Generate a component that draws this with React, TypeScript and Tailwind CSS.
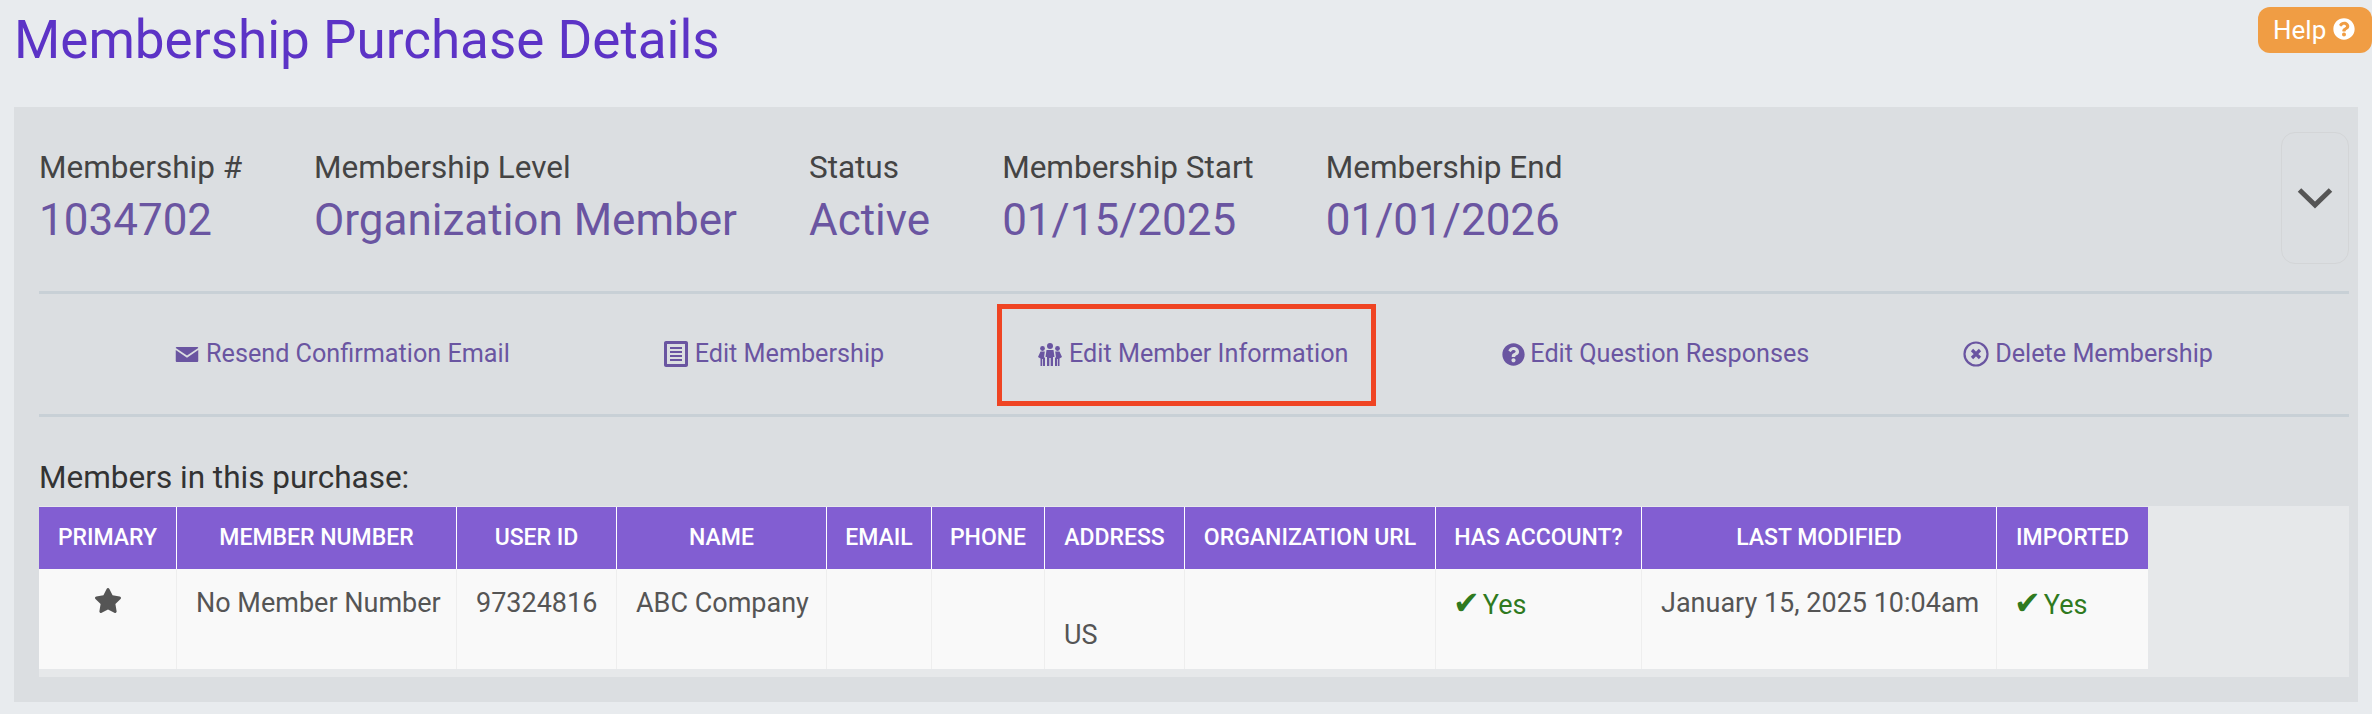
import { FaQuestionCircle, FaStar } from "react-icons/fa";

const font = { fontFamily: "Roboto, sans-serif" };

const EnvelopeIcon = () => (
  <svg viewBox="0 0 24 16" className="h-[15px] w-[24px] fill-current">
    <path d="M1 0h22c.6 0 1 .4 1 1L12 9 0 1c0-.6.4-1 1-1z" />
    <path d="M0 3.2 12 11.4 24 3.2V15c0 .6-.4 1-1 1H1c-.6 0-1-.4-1-1z" />
  </svg>
);

const ListIcon = () => (
  <svg viewBox="0 0 24 26" className="h-[26px] w-[24px] fill-current">
    <path
      fillRule="evenodd"
      d="M2 0h20c1.1 0 2 .9 2 2v22c0 1.1-.9 2-2 2H2c-1.100 0-2-.9-2-2V2C0 .9.900 0 2 0zm1 3v20h18V3z"
    />
    <path d="M6 6h12v2H6zM6 10h12v2H6zM6 14h12v2H6zM6 18h12v2H6z" />
  </svg>
);

const PeopleIcon = () => (
  <svg viewBox="0 0 24 23" className="h-[23px] w-[24px] fill-current">
    <circle cx="12" cy="3" r="3" />
    <circle cx="4.500" cy="5.500" r="2.400" />
    <circle cx="19.500" cy="5.500" r="2.400" />
    <path d="M8.500 7h7l1 7-1.500 0V23h-2.300v-8h-1.400v8H9V14H7.500z" />
    <path d="M2.500 8.500H6.800L6 14.500h1V23H4.800v-7h-.8v7H2.500v-7.500L0 14z" />
    <path d="M17.200 8.500h4.300L24 14l-2.500 1.500V23H20v-7h-.8v7H17v-8.500h1z" />
  </svg>
);

const CircleXIcon = () => (
  <svg viewBox="0 0 26 26" className="h-[26px] w-[26px] fill-none stroke-current">
    <circle cx="13" cy="13" r="11.500" strokeWidth="2.200" />
    <path d="M9 9l8 8M17 9l-8 8" strokeWidth="3.200" />
  </svg>
);

const summary = [
  { label: "Membership #", value: "1034702" },
  { label: "Membership Level", value: "Organization Member" },
  { label: "Status", value: "Active" },
  { label: "Membership Start", value: "01/15/2025" },
  { label: "Membership End", value: "01/01/2026" },
];

const columns = [
  { name: "Primary", width: "w-[138px]" },
  { name: "Member Number", width: "w-[280px]" },
  { name: "User ID", width: "w-[160px]" },
  { name: "Name", width: "w-[210px]" },
  { name: "Email", width: "w-[105px]" },
  { name: "Phone", width: "w-[113px]" },
  { name: "Address", width: "w-[140px]" },
  { name: "Organization URL", width: "w-[251px]" },
  { name: "Has Account?", width: "w-[206px]" },
  { name: "Last Modified", width: "w-[355px]" },
  { name: "Imported", width: "w-[151px]" },
];

const cell = "border-r border-[#eeeeee] px-[19px] pt-[18px] pb-[18px] align-top last:border-r-0";

const Yes = () => (
  <span className="-ml-[2px] whitespace-nowrap text-[#2f7a1f]">
    <span className="mr-[3px] text-[32px] leading-[32px]" style={{ fontFamily: "'DejaVu Sans', sans-serif" }}>
      ✔
    </span>
    Yes
  </span>
);

const App = () => {
  return (
    <div className="h-[714px] w-full overflow-hidden bg-[#e8ebee]" style={font}>
      <header className="flex h-[107px] items-start justify-between pl-[14px]">
        <h1 className="mt-[10px] text-[53px] leading-[60px] text-[#5c33c6]">
          Membership Purchase Details
        </h1>
        <button className="mt-[7px] flex h-[46px] w-[114px] items-center gap-[7px] rounded-[12px] bg-[#f09d44] pl-[15px] text-[26px] text-white">
          Help <FaQuestionCircle className="mb-[3px] h-[22px] w-[22px]" />
        </button>
      </header>

      <section className="mx-[14px] h-[595px] bg-[#dbdee1] pt-[25px] pr-[9px] pl-[25px]">
        <div className="flex h-[159px] items-start justify-between">
          <div className="flex gap-[72px] pt-[16px]">
            {summary.map((item) => (
              <div key={item.label} className="whitespace-nowrap">
                <div className="text-[31.5px] leading-[40px] text-[#444444]">{item.label}</div>
                <div className="mt-[6px] text-[44px] leading-[52px] text-[#6a55a1]">{item.value}</div>
              </div>
            ))}
          </div>
          <button className="flex h-[132px] w-[68px] items-center justify-center rounded-[14px] border border-[#d3d5d7] text-[#555555]">
            <svg viewBox="0 0 36 22" className="h-[22px] w-[36px] fill-none stroke-current">
              <path d="M2.500 3 18 18 33.500 3" strokeWidth="5" />
            </svg>
          </button>
        </div>

        <nav className="flex h-[126px] items-center justify-between border-y-[3px] border-[#c8d0d6] px-[136px] text-[25.2px] leading-[30px] whitespace-nowrap text-[#6a55a1]">
          <a className="flex items-center gap-[7px]">
            <EnvelopeIcon /> Resend Confirmation Email
          </a>
          <a className="flex items-center gap-[7px]">
            <ListIcon /> Edit Membership
          </a>
          <a className="relative flex items-center gap-[7px]">
            <PeopleIcon /> Edit Member Information
            <span className="absolute -top-[35px] -right-[28px] -bottom-[37px] -left-[41px] border-[5px] border-[#ef4423]" />
          </a>
          <a className="flex items-center gap-[5px]">
            <FaQuestionCircle className="h-[23px] w-[23px]" /> Edit Question Responses
          </a>
          <a className="flex items-center gap-[6px]">
            <CircleXIcon /> Delete Membership
          </a>
        </nav>

        <h2 className="mt-[43px] text-[31.5px] leading-[36px] text-[#333333]">Members in this purchase:</h2>

        <div className="mt-[10px] h-[171px] bg-[#e6e8ea] pt-px">
          <table className="w-[2109px] table-fixed border-separate border-spacing-0">
            <thead>
              <tr className="h-[62px] bg-[#825ed2] text-[23px] text-white uppercase">
                {columns.map((col) => (
                  <th key={col.name} className={`${col.width} border-r border-white p-0 text-center font-medium last:border-r-0`}>
                    {col.name}
                  </th>
                ))}
              </tr>
            </thead>
            <tbody>
              <tr className="bg-[#f9f9f9] text-[27px] leading-[32px] text-[#555555]">
                <td className={`${cell} text-center`}>
                  <FaStar className="mx-auto mt-[1px] h-[25px] w-[28px]" />
                </td>
                <td className={`${cell} whitespace-nowrap`}>No Member Number</td>
                <td className={cell}>97324816</td>
                <td className={`${cell} whitespace-nowrap`}>ABC Company</td>
                <td className={cell}></td>
                <td className={cell}></td>
                <td className={cell}>
                  <br />
                  US
                </td>
                <td className={cell}></td>
                <td className={cell}>
                  <Yes />
                </td>
                <td className={`${cell} whitespace-nowrap`}>January 15, 2025 10:04am</td>
                <td className={cell}>
                  <Yes />
                </td>
              </tr>
            </tbody>
          </table>
        </div>
      </section>
    </div>
  );
};

export default App;
